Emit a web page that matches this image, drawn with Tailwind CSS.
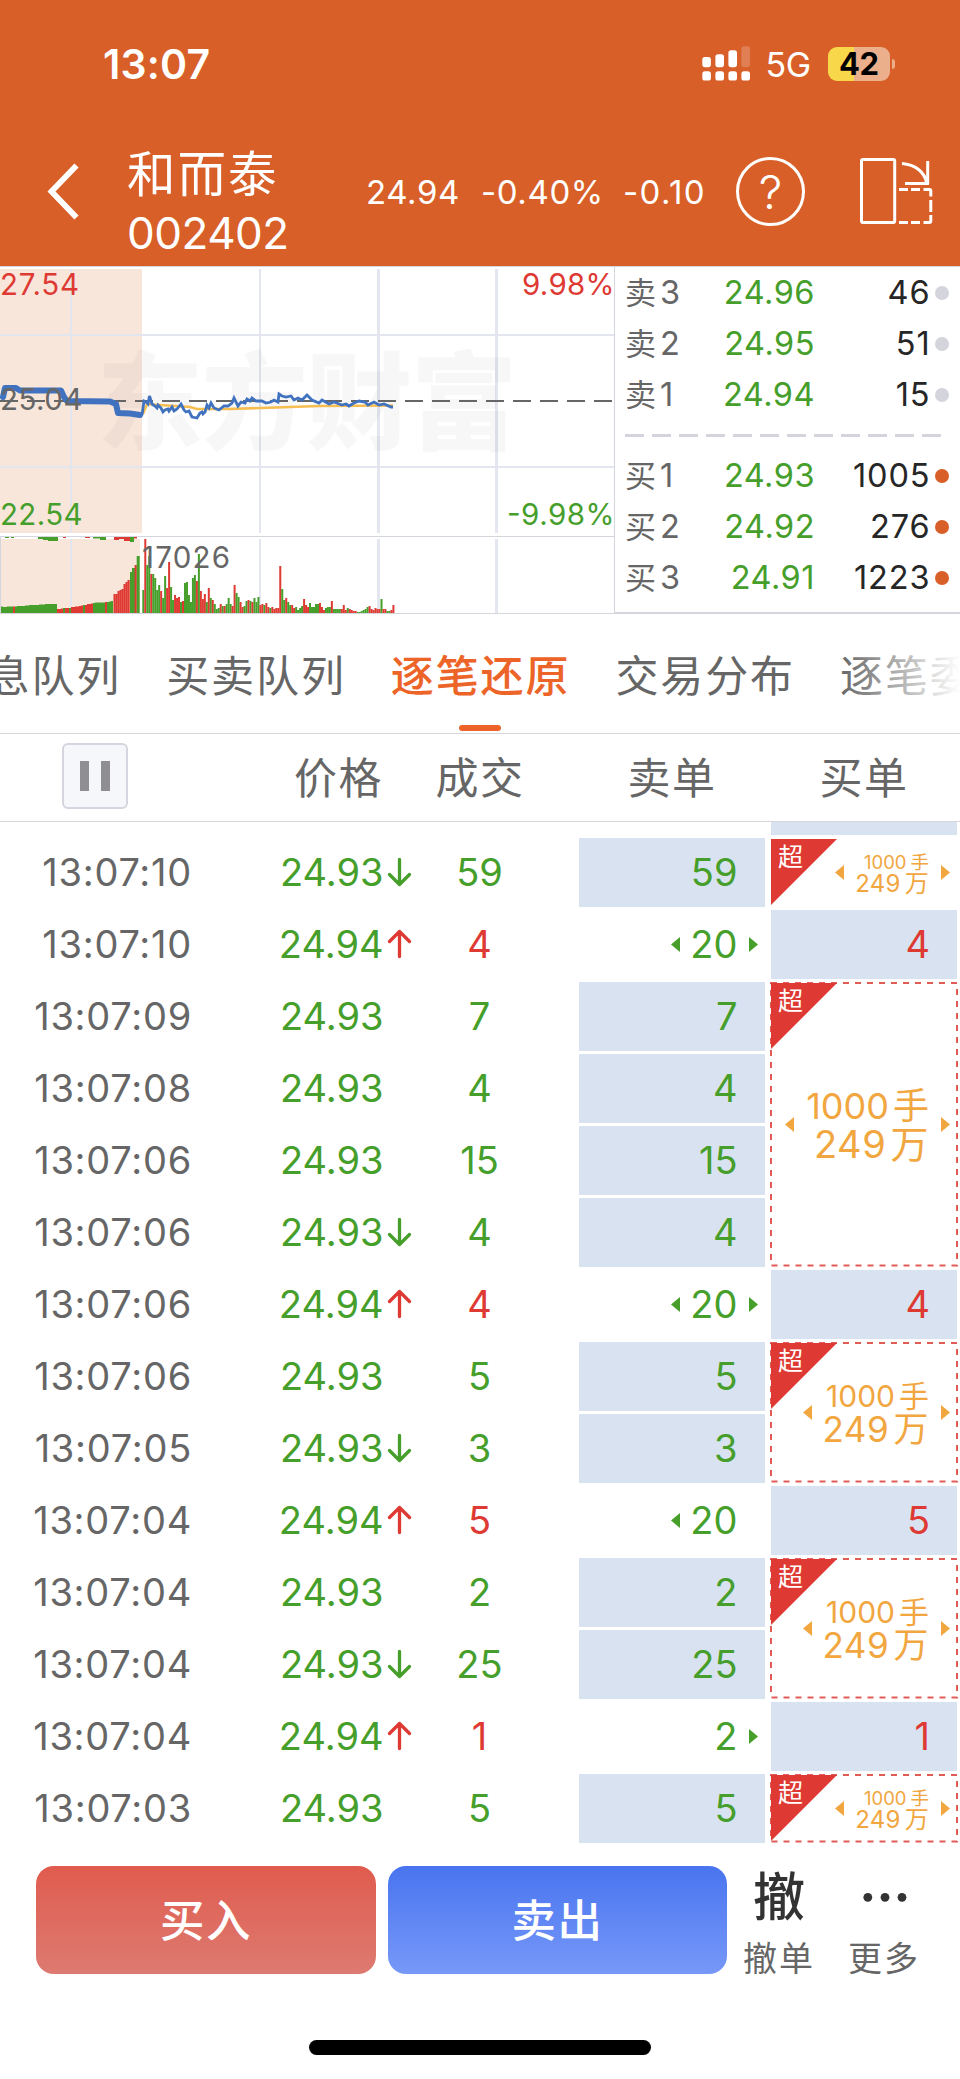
<!DOCTYPE html>
<html lang="zh-CN">
<head>
<meta charset="utf-8">
<title>和而泰 002402</title>
<script src="https://cdn.jsdelivr.net/npm/@tailwindcss/browser@4"></script>
</head>
<body class="w-[960px] h-[2079px] overflow-hidden bg-white font-['Inter','Noto_Sans_CJK_SC',sans-serif] text-[#666666] whitespace-nowrap">

<header class="h-[266px] bg-[#d85f28] text-white">
  <div class="h-[116px] pt-[12px] flex items-center">
    <div class="ml-[103px] w-[599px] text-[41px] leading-[104px] font-semibold tracking-[0.200px]">13:07</div>
    <svg class="w-[48px] h-[36px] shrink-0" viewBox="702 46 48 36" fill="#fff">
      <rect x="702.3" y="57" width="8.6" height="10.2" rx="2.6"/><rect x="715.4" y="54.3" width="8.6" height="12.9" rx="2.6"/><rect x="728.4" y="50.3" width="8.6" height="16.9" rx="2.6"/><rect x="741.4" y="46.3" width="8.6" height="20.9" rx="2.6" opacity=".2"/>
      <rect x="702.3" y="71.3" width="8.6" height="9.2" rx="2.6"/><rect x="715.4" y="71.3" width="8.6" height="9.2" rx="2.6"/><rect x="728.4" y="71.3" width="8.6" height="9.2" rx="2.6"/><rect x="741.4" y="71.3" width="8.6" height="9.2" rx="2.6"/>
    </svg>
    <div class="ml-[15.500px] w-[62.500px] text-[34px] leading-[40px] pt-[2px] tracking-[-0.500px]">5G</div>
    <div class="w-[61.500px] h-[34px] rounded-[9px] bg-linear-to-r from-[#f9d74b] from-[42%] to-[#ebaf8b] to-[42%] text-black text-[31px] leading-[34px] font-bold text-center tracking-[-0.500px]">42</div>
    <div class="ml-[2.500px] w-[3px] h-[10px] rounded-r-full bg-[#ebaf8b]"></div>
  </div>
  <div class="h-[150px] flex">
    <svg class="mt-[46px] ml-[46px] w-[34px] h-[60px]" viewBox="46 162 34 60" fill="none" stroke="#fff" stroke-width="5.8"><path d="M76.500 165.500 51.500 191.500 76.500 217.500"/></svg>
    <div class="ml-[47px] w-[240px] pt-[29px]">
      <div class="text-[48.500px] leading-[60px] tracking-[2px]">和而泰</div>
      <div class="text-[44px] leading-[60px] tracking-[-0.500px] -mt-[2px]">002402</div>
    </div>
    <div class="-ml-[1px] text-[33px] leading-[152px] flex">
      <span class="w-[115px] tracking-[0.600px]">24.94</span><span class="w-[142px] tracking-[0.600px]">-0.40%</span><span class="w-[113px] tracking-[1.400px]">-0.10</span>
    </div>
    <div class="mt-[41px] w-[69px] h-[69px] rounded-full border-[3px] border-white text-center text-[47px] leading-[63px] font-[350]">?</div>
    <svg class="ml-[54px] mt-[40px] w-[76px] h-[70px]" viewBox="859 156 76 70" fill="none" stroke="#fff" stroke-width="3">
      <rect x="861.500" y="159.500" width="33.200" height="63" rx="1.500"/>
      <path d="M902 163.500C915 164.500 925 172 926.500 183M927.700 161V184M905 183.500H929"/>
      <path d="M899 189.500H908M911 189.500H920M923.500 189.500H929.500Q930.800 189.500 930.800 191V196.500M930.800 200V212M930.800 215V221Q930.800 222.500 929.300 222.500H923.500M920 222.500H911M908 222.500H899"/>
    </svg>
  </div>
</header>

<section class="h-[348px] flex border-t border-[#d5d5de]">
  <svg class="w-[614px] h-[347px] shrink-0" viewBox="0 267 614 347">
    <path d="M0 269H142V533H0ZM1 539H140V613H1Z" fill="#f8e6db"/>
    <g fill="none" stroke="#e3e6ee">
      <path stroke-width="2" d="M71 269V533M71 539V613M260 269V533M260 539V613M0 335H614M0 467H614"/>
      <path stroke-width="3" d="M378.500 269V533M378.500 539V613M496.500 269V533M496.500 539V613"/>
    </g>
    <path d="M0 536.500H614M0 613.500H614M.5 537V613" stroke="#d5d5de" fill="none"/>
    <text x="97" y="441" font-size="106" font-weight="900" textLength="420" fill="#000" fill-opacity=".03" font-family="Noto Sans CJK SC">东方财富</text>
    <path d="M0 401H612" stroke="#666" stroke-width="2" stroke-dasharray="18 9"/>
    <path d="M143 414 147 404 160 405 190 407 197 409 230 409 290 407 320 406 393 405.500" fill="none" stroke="#f6bd50" stroke-width="2.600"/>
    <path d="M3 397 5 388 16 388 20 390.500 61 390.500 64 397 67 401 110 401.500 116 404 118 413 130 413.500 140 415" fill="none" stroke="#4072bf" stroke-width="6" stroke-linejoin="round" stroke-linecap="round"/>
    <path d="M142 415 144 401 146 402 148 404 149.500 396 152 404 155 406 157 408 158 405 161 408 163 412 165 410 168 409 169 411 172 407 174 411 177 409 181 404 184 410 186 412 189 411 192 417 197 418 200 413 202 412 203 414 205 412 207 405 209 408 211 403 214 408 219 410 224 406 228 406 232 403 234 398 238 406 241 402 245 403 247 399 250 401 252 398 256 401 262 401 266 403 271 402 274 400 278 402 279 394 282 396 286 397 291 396 294 400 298 398 302 400 307 395 312 400 319 403 322 400 329 404 334 402 342 405 346 404 349 406 354 403 359 401 365 402 368 405 374 402 379 405 384 404 391 407 393 407" fill="none" stroke="#4072bf" stroke-width="2.800"/>
    <g id="volume"></g>
    <g font-size="29.500" fill="#666">
      <text x="0" y="295.300" fill="#de3a33" textLength="79">27.54</text>
      <text x="0" y="410.300" textLength="82.500">25.04</text>
      <text x="0" y="525" fill="#469e2b" textLength="82.500">22.54</text>
      <text x="522" y="295.300" fill="#de3a33" textLength="92.500">9.98%</text>
      <text x="507" y="525" fill="#469e2b" textLength="107.500">-9.98%</text>
      <text x="142" y="568" textLength="88">17026</text>
    </g>
  </svg>
  <div class="w-[346px] h-[347px] border-l border-b-2 border-[#d5d5de] text-[32.500px] leading-[51px]">
    <div id="asks"></div>
    <div class="h-[30px] pt-[14px]"><svg class="ml-[10px] w-[316px] h-[3px]" viewBox="0 0 316 3"><path d="M0 1.500H316" stroke="#d4d5dc" stroke-width="3" stroke-dasharray="19 8"/></svg></div>
    <div id="bids"></div>
  </div>
</section>

<nav class="relative h-[120px] border-b border-[#d5d5da] overflow-hidden">
  <div class="flex gap-[45px] -ml-[13.500px] text-[43px] leading-[125px] tracking-[1.900px]">
    <span>息队列</span><span>买卖队列</span><span class="text-[#ed6428] font-medium">逐笔还原</span><span>交易分布</span><span>逐笔委托</span>
  </div>
  <div class="absolute left-[459px] top-[111px] w-[42px] h-[6px] rounded-[3px] bg-[#ed6428]"></div>
  <div class="absolute right-0 top-0 w-[120px] h-[119px] bg-linear-to-r from-white/0 to-white"></div>
</nav>

<div class="h-[88px] border-b border-[#d5d5da] flex text-[43px] leading-[88px] tracking-[1.500px]">
  <div class="mt-[9px] ml-[62px] w-[66px] h-[66px] rounded-[6px] border-2 border-[#d4d5de] bg-[#f6f7fa] flex items-center justify-center gap-[12px]"><i class="w-[9px] h-[30px] bg-[#8f8e93]"></i><i class="w-[9px] h-[30px] bg-[#8f8e93]"></i></div>
  <div class="ml-[166px] w-[98px]">价格</div>
  <div class="w-[176px] text-center">成交</div>
  <div class="ml-[11px] w-[186px] text-center">卖单</div>
  <div class="ml-[6px] w-[186px] text-center">买单</div>
</div>

<main class="h-[1023px] flex text-[38px] leading-[70px]">
  <div id="trades" class="w-[765px] pt-[15px]"></div>
  <div class="ml-[6px] w-[189px]">
    <div class="w-[186px] h-[12.500px] bg-[#d9e2f1]"></div>
    <div id="buys" class="mt-[2.500px]"></div>
  </div>
</main>

<footer class="h-[234px] pt-[21px]">
  <div class="flex pl-[36px] h-[174px]">
    <div class="w-[340px] h-[108px] rounded-[18px] bg-linear-to-b from-[#e05b4e] to-[#dd7a71] text-white text-[44.500px] leading-[110px] font-medium text-center tracking-[1.500px]">买入</div>
    <div class="ml-[12px] w-[339px] h-[108px] rounded-[18px] bg-linear-to-b from-[#4974ef] to-[#7798f8] text-white text-[44.500px] leading-[110px] font-medium text-center tracking-[1.500px]">卖出</div>
    <div class="ml-[16px] w-[72px] text-center">
      <div class="text-[52px] leading-[64px] h-[61px] font-medium text-[#333]">撤</div>
      <div class="text-[34px] leading-[63px] tracking-[2px]">撤单</div>
    </div>
    <div class="ml-[33px] w-[72px] text-center">
      <svg class="w-[72px] h-[61px] block" viewBox="848 1866 72 61" fill="#333"><circle cx="867.800" cy="1897.300" r="4.400"/><circle cx="885" cy="1897.300" r="4.400"/><circle cx="902" cy="1897.300" r="4.400"/></svg>
      <div class="text-[34px] leading-[63px] tracking-[2px]">更多</div>
    </div>
  </div>
  <div class="ml-[309px] w-[342px] h-[15px] rounded-full bg-black"></div>
</footer>

<script>
// Order book
const level = (label, n, price, qty, dot) => `<div class="h-[51px] flex items-center pr-[11.500px]">
  <span class="ml-[10px] w-[35px] text-[31px]">${label}</span><span class="w-[40px]">${n}</span>
  <span class="w-[115px] text-right text-[#469e2b] tracking-[0.500px]">${price}</span>
  <span class="ml-auto text-right text-[#262626] tracking-[0.900px]">${qty}</span><i class="ml-[4px] w-[14px] h-[14px] rounded-full ${dot}"></i></div>`;
document.getElementById('asks').innerHTML = [[3,'24.96',46],[2,'24.95',51],[1,'24.94',15]].map(r => level('卖', ...r, 'bg-[#d4d5dc]')).join('');
document.getElementById('bids').innerHTML = [[1,'24.93',1005],[2,'24.92',276],[3,'24.91',1223]].map(r => level('买', ...r, 'bg-[#d85f28]')).join('');

// Arrow heads beside order sizes
const tri = (dir, cls) => `<svg class="w-[9px] h-[15px] shrink-0 ${cls}" viewBox="0 0 9 15" fill="currentColor"><path d="${dir === 'l' ? 'M9 0V15L0 7.5Z' : 'M0 0V15L9 7.5Z'}"/></svg>`;
const move = {
  d: `<svg class="w-[25px] h-[30px] text-[#469e2b]" viewBox="0 0 25 30" fill="none" stroke="currentColor" stroke-width="3.300" stroke-linecap="round" stroke-linejoin="round"><path d="M12.500 2.500V27.500M2.500 17.500 12.500 27.500 22.500 17.500"/></svg>`,
  u: `<svg class="w-[25px] h-[30px] text-[#de3a33]" viewBox="0 0 25 30" fill="none" stroke="currentColor" stroke-width="3.300" stroke-linecap="round" stroke-linejoin="round"><path d="M12.500 27.500V2.500M2.500 12.500 12.500 2.500 22.500 12.500"/></svg>`,
  '': ''
};
// time, price, move, volume, sell size, partial-fill sides
const trades = [
  ['13:07:10','24.93','d',59,59,''],['13:07:10','24.94','u',4,20,'lr'],['13:07:09','24.93','',7,7,''],
  ['13:07:08','24.93','',4,4,''],['13:07:06','24.93','',15,15,''],['13:07:06','24.93','d',4,4,''],
  ['13:07:06','24.94','u',4,20,'lr'],['13:07:06','24.93','',5,5,''],['13:07:05','24.93','d',3,3,''],
  ['13:07:04','24.94','u',5,20,'l'],['13:07:04','24.93','',2,2,''],['13:07:04','24.93','d',25,25,''],
  ['13:07:04','24.94','u',1,2,'r'],['13:07:03','24.93','',5,5,'']];
document.getElementById('trades').innerHTML = trades.map(([t,p,m,v,s,a]) => `<div class="h-[72px] flex">
  <span class="w-[192px] text-right tracking-[0.750px]">${t}</span>
  <span class="w-[191.500px] text-right text-[#469e2b]">${p}</span>
  <span class="w-[32.500px] h-[70px] pl-[3px] flex items-center">${move[m]}</span>
  <span class="w-[127px] text-center ${m === 'u' ? 'text-[#de3a33]' : 'text-[#469e2b]'}">${v}</span>
  <span class="ml-[36px] mt-[0.500px] w-[186px] h-[69px] flex items-center justify-end text-[#469e2b] ${a ? '' : 'bg-[#d9e2f1]'}">
    ${a.includes('l') ? tri('l','mr-[10.500px]') : ''}<span>${s}</span>${a.includes('r') ? tri('r','ml-[11.500px] mr-[7px]') : '<i class="w-[27.500px]"></i>'}</span></div>`).join('');

// Buy side: [rows covered, size] for plain orders, [rows covered] for super-large orders
const sizes = {
  1: ['text-[18.500px] leading-[21px]', 'text-[24px] leading-[21px] tracking-[0.300px]', 'mr-[11px]'],
  2: ['text-[30px] leading-[33px]', 'text-[35px] leading-[33px] tracking-[0.600px]', 'mr-[10px]'],
  4: ['text-[36px] leading-[38px]', 'text-[38px] leading-[38px] tracking-[0.600px]', 'mr-[12px]']
};
const heights = {1: ['h-[72px]', 66.5], 2: ['h-[144px]', 138.5], 4: ['h-[288px]', 282.5]};
document.getElementById('buys').innerHTML = [[1],[1,4],[4],[1,4],[2],[1,5],[2],[1,1],[1]].map(([n, q], i) => q
  ? `<div class="h-[72px] pt-[0.500px]"><div class="w-[186px] h-[69px] leading-[69px] bg-[#d9e2f1] text-[#de3a33] text-right pr-[27px]">${q}</div></div>`
  : `<div class="relative ${heights[n][0]}">
      <svg class="absolute left-[-1px] top-[1px] w-[189px] h-full" fill="none">
        ${i ? `<rect x="1" y="1" width="186" height="${heights[n][1]}" stroke="#e25c57" stroke-width="2" stroke-dasharray="6 6"/>` : ''}
        <path d="M1 1H67L1 67Z" fill="#de3a33"/></svg>
      <span class="absolute left-[7px] top-[4px] text-[25px] leading-[32px] text-white">超</span>
      <div class="h-full pb-[1px] flex items-center justify-end text-[#f1a640]">
        ${tri('l', sizes[n][2])}
        <div class="text-right"><div class="${sizes[n][0]}">1000<span class="ml-[4px]">手</span></div><div class="${sizes[n][1]}">249<span class="ml-[4px]">万</span></div></div>
        ${tri('r', 'ml-[12px] mr-[10px]')}</div></div>`).join('');

// Volume bars: [x, width, height, colour]
const G = '#469e2b', R = '#de3a33', bars = [];
[6.5,6,6,6.5,6.5,6.5,6.5,6.500,7,7,7,7,7.500,7.500,8,8,8,8,8,8.500,8.500,8.500,9,9,9,9,9,9].forEach((h, i) => bars.push([1 + i * 2, 2, h, i === 6 ? R : G]));
[4,4,4.500,5,5,5,5,6,6,6.500,6.500,7,7.500,8,8,9,9,9.500,10,10.500,10.500,10.500,10.500,10.500,11,11,11.500,12].forEach((h, i) => bars.push([57 + i * 2, 2, h, i < 18 && i !== 3 && i !== 6 && i !== 13 || i === 24 ? R : G]));
[[113.5,19],[115.5,19],[117.5,22],[119.5,23],[121.5,24],[123.5,29],[125.5,31],[127.5,33]].forEach(([x, h]) => bars.push([x, 2.200, h, R]));
bars.push([130,2.200,41,G],[132,3,45,G],[134.600,2.200,48,R],[136.700,3,57,G]);
('g23 r74 g48 g57 r39 g39 g35 g23 g28 r22 g15 g37 r25 r51 g26 g13 r18 r15 r16 g11 r12 g30 g31 g18 g11 g35 g38 r32 g59 r22 r14 r19 g11 r25 g15 r13 g9 g4 g5 r9 g7 r7 g9 g15 g9 r7 r28 g20 g16 r11 r6 g7 g12 r13 g12 r11 g15 g11 g16 r8 r9 g8 r10 r6 g5 r6 r4 r5 r5 r47 g24 g13 r15 g11 g8 r8 r5 g6 g3 ' +
 'g5 g7 r14 r8 r6 g10 g6 g6 g9 g9 r10 r6 r3 g5 g6 g6 r12 g4 g4 g4 g4 r4 r8 r3 g5 r4 r3 r2 r2 g1 g1 g2 g3 g4 g6 r7 r4 r3 r5 r4 r4 g14 r4 r4 g2 g2 r3 r8')
 .split(' ').forEach((b, i) => bars.push([142.300 + i * 1.985, 2, +b.slice(1), b[0] === 'g' ? G : R]));
const hanging = [[5,4,1,G],[11,3,1,G],[38,5,2,G],[43,5,3,G],[48,10,4,G],[63,3,1,R],[85,5,1,R],[93,8,1.500,G],[100,6,3,G],[114,5,3,R],[119,6,2,R],[124,7,4,R],[130,4,5,G],[134,3,1.500,R]];
document.getElementById('volume').innerHTML =
  bars.map(([x, w, h, c]) => `<rect x="${x}" y="${613 - h}" width="${w}" height="${h}" fill="${c}"/>`).join('') +
  hanging.map(([x, w, h, c]) => `<rect x="${x}" y="537" width="${w}" height="${h}" fill="${c}"/>`).join('');
</script>
</body>
</html>
